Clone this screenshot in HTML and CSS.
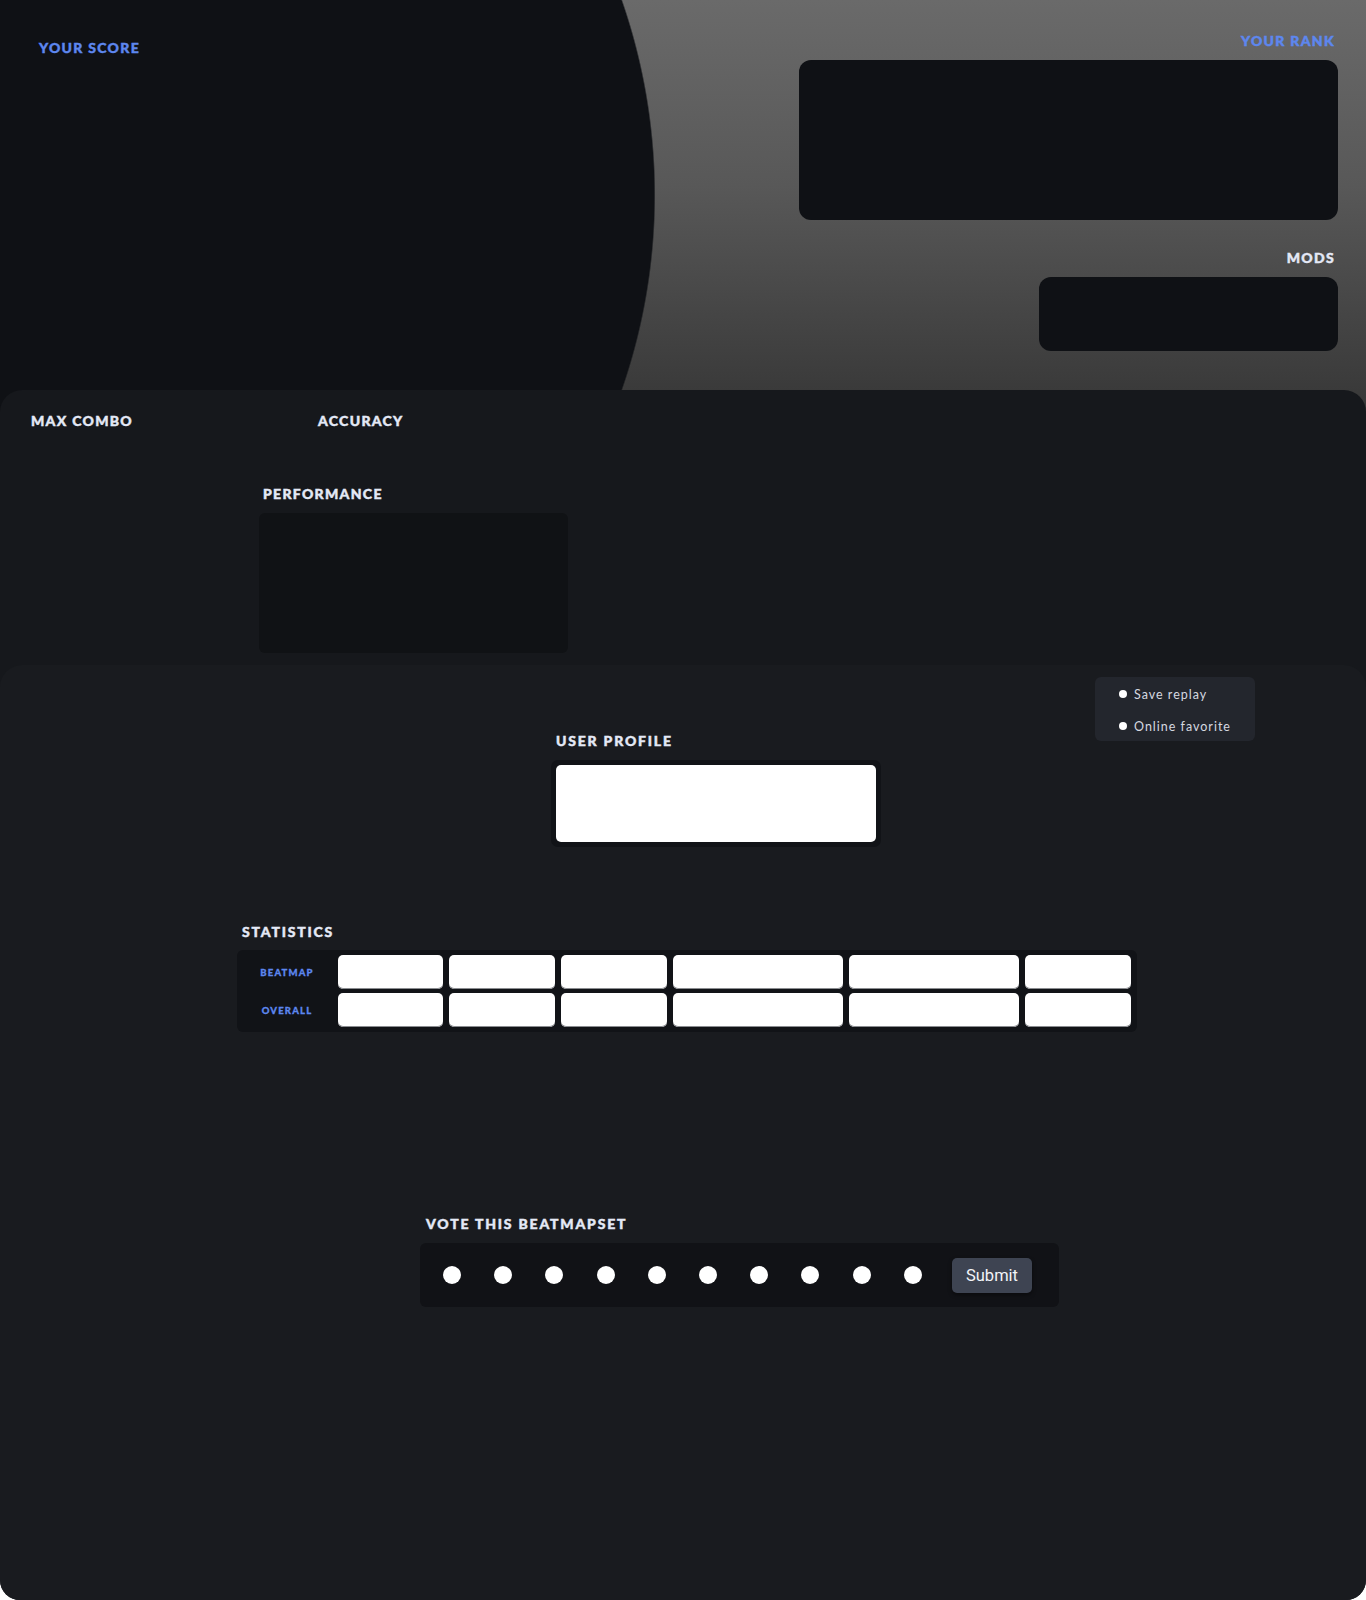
FILE: index.html
```html
<!DOCTYPE html>
<html lang="en">
<head>
<meta charset="utf-8">
<title>Score</title>
<link rel="stylesheet" href="styles.css">
</head>
<body>
<div class="page">
  <section class="hero">
    <div class="hero-left">
      <div class="label label-blue">YOUR SCORE</div>
    </div>
    <div class="hero-right">
      <div class="label label-blue">YOUR RANK</div>
      <div class="rank-box"></div>
      <div class="label mods-label">MODS</div>
      <div class="mods-box"></div>
    </div>
  </section>

  <section class="middle">
    <div class="stat-row">
      <div class="label combo">MAX COMBO</div>
      <div class="label">ACCURACY</div>
    </div>
    <div class="perf">
      <div class="label perf-label">PERFORMANCE</div>
      <div class="perf-box"></div>
    </div>
  </section>

  <section class="lower">
    <ul class="options">
      <li class="option"><span class="dot"></span>Save replay</li>
      <li class="option"><span class="dot"></span>Online favorite</li>
    </ul>

    <div class="profile">
      <div class="label sub-label">USER PROFILE</div>
      <div class="profile-box"><div class="profile-inner"></div></div>
    </div>

    <div class="stats">
      <div class="label sub-label">STATISTICS</div>
      <div class="stats-table">
        <div class="row-label">BEATMAP</div>
        <div class="cell"></div><div class="cell"></div><div class="cell"></div><div class="cell"></div><div class="cell"></div><div class="cell"></div>
        <div class="row-label">OVERALL</div>
        <div class="cell"></div><div class="cell"></div><div class="cell"></div><div class="cell"></div><div class="cell"></div><div class="cell"></div>
      </div>
    </div>

    <div class="vote">
      <div class="label sub-label">VOTE THIS BEATMAPSET</div>
      <div class="vote-box">
        <div class="vote-dots">
          <span class="vdot"></span><span class="vdot"></span><span class="vdot"></span><span class="vdot"></span><span class="vdot"></span>
          <span class="vdot"></span><span class="vdot"></span><span class="vdot"></span><span class="vdot"></span><span class="vdot"></span>
        </div>
        <button class="submit" type="button">Submit</button>
      </div>
    </div>
  </section>
</div>
</body>
</html>
```

FILE: styles.css
```css
* { box-sizing: border-box; }

body {
  margin: 0;
  background: #ffffff;
  font-family: Lato, "Liberation Sans", sans-serif;
}

.page {
  width: 1366px;
  height: 1600px;
  border-radius: 0 0 20px 20px;
  overflow: hidden;
  background: #191b1f;
  display: flex;
  flex-direction: column;
}

.label {
  font-family: Lato, "Liberation Sans", sans-serif;
  font-weight: 900;
  font-size: 14px;
  line-height: 14px;
  height: 14px;
  letter-spacing: 1.3px;
  color: #e4e9f6;
  white-space: nowrap;
  -webkit-text-stroke: 0.45px currentColor;
}

.label-blue {
  color: #5d87ef;
}

/* ---------- hero ---------- */
.hero {
  height: 412px;
  flex: none;
  display: flex;
  justify-content: space-between;
  background:
    radial-gradient(circle 593px at 62px 195px, #0f1115 592px, rgba(15,17,21,0) 593.5px),
    linear-gradient(180deg, #6a6a6a 0%, #585858 45%, #3a3a3a 95%, #383838 100%);
}

.hero-left {
  padding: 41px 0 0 39px;
}

.hero-right {
  padding: 34px 28px 0 0;
  display: flex;
  flex-direction: column;
  align-items: flex-end;
}

.hero-right .label {
  padding-right: 3px;
}

.rank-box {
  margin-top: 12px;
  width: 539px;
  height: 160px;
  border-radius: 12px;
  background: #0f1115;
}

.mods-label {
  margin-top: 31px;
}

.mods-box {
  margin-top: 12px;
  width: 299px;
  height: 74px;
  border-radius: 12px;
  background: #0f1115;
}

/* ---------- middle ---------- */
.middle {
  margin-top: -22px;
  height: 297px;
  flex: none;
  border-radius: 22px 22px 0 0;
  background: #16181c;
  padding: 24px 0 0 31px;
  position: relative;
}

.stat-row {
  display: flex;
}

.combo {
  width: 287px;
}

.perf {
  margin-top: 59px;
  margin-left: 228px;
}

.perf-label {
  padding-left: 4px;
}

.perf-box {
  margin-top: 12px;
  width: 309px;
  height: 140px;
  border-radius: 6px;
  background: #101215;
}

/* ---------- lower ---------- */
.lower {
  margin-top: -22px;
  flex: 1;
  border-radius: 22px 22px 0 0;
  background: #191b1f;
  position: relative;
  padding-top: 69px;
}

.options {
  position: absolute;
  top: 12px;
  right: 111px;
  width: 160px;
  height: 64px;
  margin: 0;
  padding: 1px 0 0 24px;
  list-style: none;
  background: #23262d;
  border-radius: 6px;
}

.option {
  height: 32px;
  display: flex;
  align-items: center;
  gap: 7px;
  font-family: Lato, "Liberation Sans", sans-serif;
  font-size: 12.5px;
  letter-spacing: 1px;
  color: #d6d9e0;
}

.dot {
  width: 8px;
  height: 8px;
  border-radius: 50%;
  background: #ffffff;
  flex: none;
}

.sub-label {
  letter-spacing: 1.8px;
}

.profile {
  margin-left: 551px;
}

.profile .sub-label {
  padding-left: 5px;
}

.profile-box {
  margin-top: 12px;
  width: 330px;
  height: 87px;
  padding: 5px;
  border-radius: 7px;
  background: #111317;
}

.profile-inner {
  width: 100%;
  height: 100%;
  border-radius: 5px;
  background: #ffffff;
}

.stats {
  margin-top: 78px;
  margin-left: 237px;
}

.stats .sub-label {
  padding-left: 5px;
}

.stats-table {
  margin-top: 11px;
  width: 900px;
  height: 82px;
  padding: 5px;
  border-radius: 6px;
  background: #111317;
  display: grid;
  grid-template-columns: 90px 105px 106px 106px 170px 170px 106px;
  grid-template-rows: 34px 34px;
  column-gap: 6px;
  row-gap: 4px;
}

.row-label {
  display: flex;
  align-items: center;
  justify-content: center;
  font-family: Lato, "Liberation Sans", sans-serif;
  font-weight: 900;
  font-size: 9.5px;
  letter-spacing: 1.2px;
  color: #5d87ef;
  -webkit-text-stroke: 0.3px currentColor;
}

.cell {
  background: #ffffff;
  border-radius: 5px;
  box-shadow: inset 0 -1px 0 #8a8c90;
}

.vote {
  margin-top: 185px;
  margin-left: 420px;
}

.vote .sub-label {
  padding-left: 6px;
}

.vote-box {
  margin-top: 12px;
  width: 639px;
  height: 64px;
  border-radius: 6px;
  background: #111216;
  display: flex;
  align-items: center;
  padding: 0 27px 0 23px;
  justify-content: space-between;
}

.vote-dots {
  display: flex;
  gap: 33.2px;
}

.vdot {
  width: 18px;
  height: 18px;
  border-radius: 50%;
  background: #ffffff;
}

.submit {
  width: 80px;
  height: 35px;
  border: none;
  border-radius: 5px;
  background: #3e4452;
  color: #f2f4f8;
  font-family: Roboto, "Liberation Sans", sans-serif;
  font-size: 16.5px;
  padding: 0;
  box-shadow: 0 2px 4px rgba(0,0,0,0.45);
}
```
